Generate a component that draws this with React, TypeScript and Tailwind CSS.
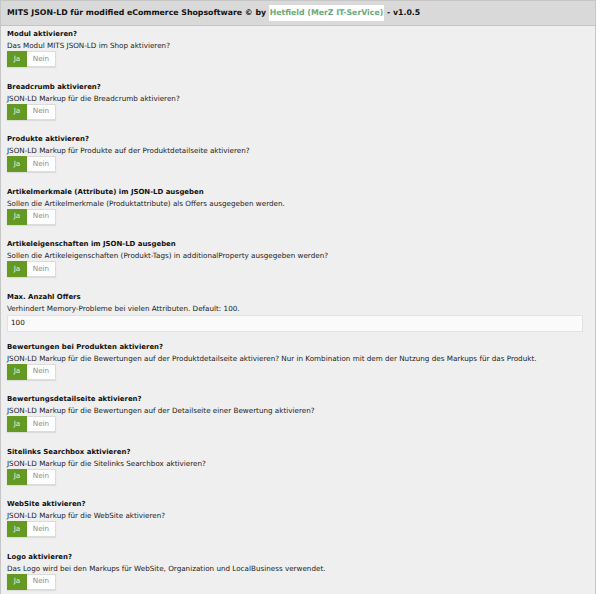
import React from "react";

type Item = { title: string; desc: string; input?: string };

const items: Item[] = [
  { title: "Modul aktivieren?", desc: "Das Modul MITS JSON-LD im Shop aktivieren?" },
  { title: "Breadcrumb aktivieren?", desc: "JSON-LD Markup für die Breadcrumb aktivieren?" },
  { title: "Produkte aktivieren?", desc: "JSON-LD Markup für Produkte auf der Produktdetailseite aktivieren?" },
  { title: "Artikelmerkmale (Attribute) im JSON-LD ausgeben", desc: "Sollen die Artikelmerkmale (Produktattribute) als Offers ausgegeben werden." },
  { title: "Artikeleigenschaften im JSON-LD ausgeben", desc: "Sollen die Artikeleigenschaften (Produkt-Tags) in additionalProperty ausgegeben werden?" },
  { title: "Max. Anzahl Offers", desc: "Verhindert Memory-Probleme bei vielen Attributen. Default: 100.", input: "100" },
  { title: "Bewertungen bei Produkten aktivieren?", desc: "JSON-LD Markup für die Bewertungen auf der Produktdetailseite aktivieren? Nur in Kombination mit dem der Nutzung des Markups für das Produkt." },
  { title: "Bewertungsdetailseite aktivieren?", desc: "JSON-LD Markup für die Bewertungen auf der Detailseite einer Bewertung aktivieren?" },
  { title: "Sitelinks Searchbox aktivieren?", desc: "JSON-LD Markup für die Sitelinks Searchbox aktivieren?" },
  { title: "WebSite aktivieren?", desc: "JSON-LD Markup für die WebSite aktivieren?" },
  { title: "Logo aktivieren?", desc: "Das Logo wird bei den Markups für WebSite, Organization und LocalBusiness verwendet." },
];

function Toggle() {
  return (
    <div className="flex h-[16px] w-fit text-[7.2px] shadow-[0_1px_1px_rgba(0,0,0,0.08)]">
      <div className="flex w-[20px] items-center justify-center bg-[#649a23] text-[#e4efd6]">Ja</div>
      <div className="flex w-[29px] items-center justify-center border border-l-0 border-[#dcdcdc] bg-white text-[#8a8a8a]">Nein</div>
    </div>
  );
}

export default function App() {
  return (
    <div
      className="min-h-[594px] w-[600px] bg-white text-[#111]"
      style={{ fontFamily: '"DejaVu Sans", Verdana, sans-serif' }}
    >
      <div className="w-[596px] border border-[#c6c6c6] bg-[#efefef] min-h-[594px]">
        <div className="flex h-[25px] items-center border-b border-[#c4c4c4] bg-[#d9d9d9] pl-[6px] text-[7.8px] font-bold">
          <span>MITS JSON-LD für modified eCommerce Shopsoftware © by&nbsp;</span>
          <span className="bg-white px-[1px] py-[2px] text-[#6aa97a]">Hetfield (MerZ IT-SerVice)</span>
          <span>&nbsp;- v1.0.5</span>
        </div>
        <div className="px-[6px] pt-[2px]">
          {items.map((it) => (
            <div key={it.title} className={it.input ? "mb-[9px]" : "mb-[13.5px]"}>
              <div className="h-[12px] text-[6.95px] font-bold leading-[12px]">{it.title}</div>
              <div className="h-[11px] text-[7.2px] leading-[11px] text-[#1a1a1a]">{it.desc}</div>
              {it.input ? (
                <div className="mt-[1px] flex h-[17px] w-[576px] items-center border border-[#e2e2e2] bg-[#fafafa] pl-[3px] text-[7.2px]">
                  {it.input}
                </div>
              ) : (
                <Toggle />
              )}
            </div>
          ))}
        </div>
      </div>
    </div>
  );
}
